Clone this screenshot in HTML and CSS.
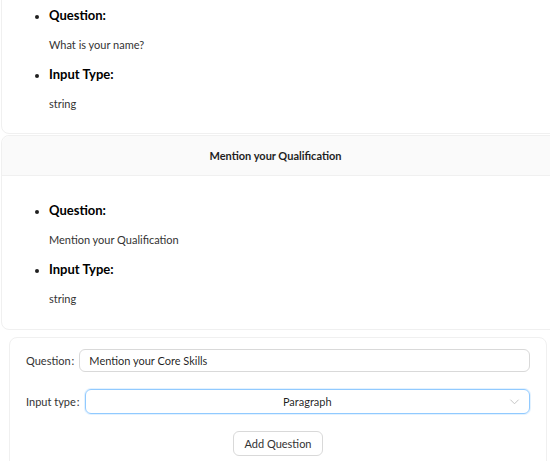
FILE: index.html
```html
<!DOCTYPE html>
<html>
<head>
<meta charset="utf-8">
<link rel="stylesheet" href="styles.css">
</head>
<body>
<div class="page">
  <div class="card card-first">
    <div class="card-body">
      <ul class="details">
        <li><h4 class="label">Question:</h4><p class="value">What is your name?</p></li>
        <li><h4 class="label">Input Type:</h4><p class="value">string</p></li>
      </ul>
    </div>
  </div>
  <div class="card">
    <div class="card-head">Mention your Qualification</div>
    <div class="card-body">
      <ul class="details">
        <li><h4 class="label">Question:</h4><p class="value">Mention your Qualification</p></li>
        <li><h4 class="label">Input Type:</h4><p class="value">string</p></li>
      </ul>
    </div>
  </div>
  <div class="form-card">
    <div class="form-row">
      <label class="form-label">Question</label>
      <div class="input">Mention your Core Skills</div>
    </div>
    <div class="form-row">
      <label class="form-label">Input type</label>
      <div class="select">
        <span class="select-value">Paragraph</span>
        <svg class="chev" width="11" height="11" viewBox="0 0 12 12"><path d="M1.5 4 L6 8.5 L10.5 4" fill="none" stroke="#bfbfbf" stroke-width="1"/></svg>
      </div>
    </div>
    <div class="actions">
      <button class="btn">Add Question</button>
    </div>
  </div>
</div>
</body>
</html>
```

FILE: styles.css
```css
* { box-sizing: border-box; }
html, body { margin: 0; padding: 0; background: #fff; }
body {
  font-family: "Lato", "Open Sans", sans-serif;
  font-size: 11px;
  color: rgba(0,0,0,0.88);
  overflow: hidden;
}
.page {
  margin-top: -10px;
  padding: 0 0 0 1px;
  width: 560px;
}
.card {
  border: 1px solid #f0f0f0;
  border-radius: 8px;
  background: #fff;
}
.card-first { margin-bottom: 1px; }
.card-first .card-body { padding-top: 14px; padding-bottom: 19px; }
.card-head {
  height: 40px;
  display: flex;
  align-items: center;
  justify-content: center;
  background: #fafafa;
  border-bottom: 1px solid #f0f0f0;
  border-radius: 8px 8px 0 0;
  font-weight: 700;
  font-size: 11px;
  color: #1f1f1f;
  padding-right: 10px;
}
.card-body { padding: 24px 24px 20px 24px; }
.details { margin: 0; padding: 0 0 0 23px; }
.details li { margin: 0; }
.details li + li { margin-top: 9px; }
.label {
  margin: 0 0 10px 0;
  font-size: 13px;
  line-height: 20px;
  font-weight: 700;
  color: #000;
}
.value { margin: 0; line-height: 20px; font-size: 11px; color: #333; }
.form-card {
  margin: 7px 4px 0 8px;
  width: 538px;
  border: 1px solid #f0f0f0;
  border-radius: 8px;
  padding: 11px 16px 20px 16px;
}
.form-row {
  display: flex;
  align-items: center;
  margin-bottom: 17px;
}
.form-label {
  font-size: 11px;
  color: #333;
  margin-right: 5px;
}
.form-label::after { content: ":"; margin-left: 1px; }
.input {
  flex: 1;
  height: 23px;
  border: 1px solid #d9d9d9;
  border-radius: 6px;
  padding: 0 9px;
  display: flex;
  align-items: center;
  font-size: 11px;
}
.select {
  flex: 1;
  height: 25px;
  border: 1px solid #91caff;
  border-radius: 6px;
  position: relative;
  display: flex;
  align-items: center;
  justify-content: center;
  font-size: 11px;
  box-shadow: 0 0 0 1px rgba(145,202,255,0.25);
}
.chev { position: absolute; right: 9px; top: 6px; }
.actions { display: flex; justify-content: center; }
.btn {
  font-family: inherit;
  font-size: 11px;
  height: 25px;
  padding: 0 10px;
  background: #fff;
  border: 1px solid #d9d9d9;
  border-radius: 6px;
  color: #333;
}
```
